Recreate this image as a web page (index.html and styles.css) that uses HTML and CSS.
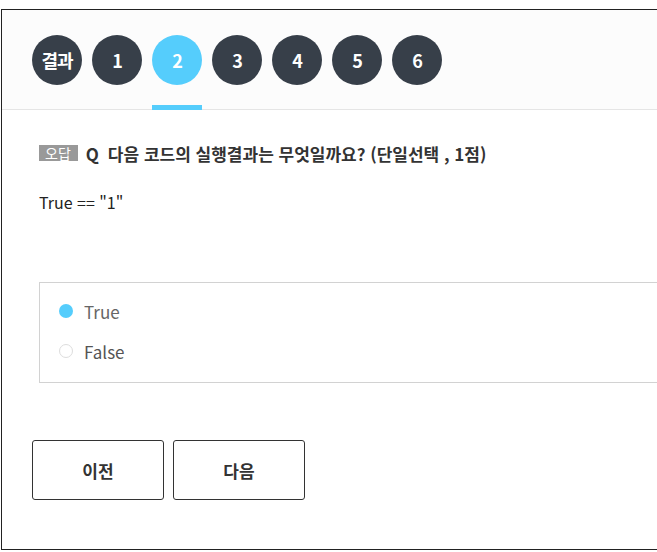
FILE: index.html
```html
<!DOCTYPE html>
<html lang="ko">
<head>
    <meta charset="UTF-8">
    <meta name="viewport" content="width=device-width, initial-scale=1.0">
    <title>퀴즈</title>
    <link rel="stylesheet" href="styles.css">
</head>
<body>
    <div class="quiz">
        <div class="quiz-nav">
            <span class="step">결과</span>
            <span class="step">1</span>
            <span class="step active">2</span>
            <span class="step">3</span>
            <span class="step">4</span>
            <span class="step">5</span>
            <span class="step">6</span>
        </div>

        <div class="question">
            <div class="question-title">
                <span class="badge">오답</span>
                <span class="q-mark">Q</span>
                <span>다음 코드의 실행결과는 무엇일까요? (단일선택 , 1점)</span>
            </div>
            <p class="code">True == "1"</p>

            <div class="options">
                <label class="option checked">
                    <span class="radio"></span>
                    <span class="option-text">True</span>
                </label>
                <label class="option">
                    <span class="radio"></span>
                    <span class="option-text">False</span>
                </label>
            </div>
        </div>

        <div class="buttons">
            <button type="button">이전</button>
            <button type="button">다음</button>
        </div>
    </div>
</body>
</html>
```

FILE: styles.css
```css
html, body {
    overflow: hidden;
}

body {
    margin: 0;
    font-family: "Noto Sans CJK KR", "Noto Sans", sans-serif;
    background: #ffffff;
    color: #333;
}

/* the frame is cut off at the right edge of the window */
.quiz {
    margin: 9px 0 0 1px;
    height: 539px;
    border: 1px solid #222;
    border-right: none;
}

.quiz-nav {
    display: flex;
    gap: 10px;
    padding: 25px 0 24px 30px;
    background-color: #fcfcfc;
    border-bottom: 1px solid #e5e5e5;
}

.step {
    position: relative;
    width: 50px;
    height: 50px;
    border-radius: 50%;
    background-color: #373f49;
    color: #ffffff;
    font-size: 18px;
    font-weight: bold;
    display: flex;
    justify-content: center;
    align-items: center;
    letter-spacing: -1px;
}

.step.active {
    background-color: #55cdfc;
}

.step.active::after {
    content: "";
    position: absolute;
    left: 0;
    top: 70px;
    width: 50px;
    height: 5px;
    background-color: #55cdfc;
}

.question {
    padding: 33px 0 0 37px;
}

.question-title {
    display: flex;
    align-items: center;
    font-size: 17px;
    font-weight: bold;
    color: #333;
    height: 20px;
}

.badge {
    background-color: #999;
    color: #fff;
    font-size: 14px;
    font-weight: normal;
    padding: 0 7px 0 6px;
    height: 16px;
    line-height: 16px;
    margin-right: 8px;
}

.q-mark {
    margin-right: 9px;
}

.code {
    margin: 28px 0 0 0;
    font-size: 16px;
    color: #222;
    line-height: 22px;
}

.options {
    margin-top: 69px;
    border: 1px solid #d2d2d2;
    border-right: none;
    padding: 13px 0 16px 19px;
    display: flex;
    flex-direction: column;
    gap: 10px;
}

.option {
    display: flex;
    align-items: center;
    gap: 11px;
    height: 30px;
    font-size: 17px;
    color: #555;
}

.radio {
    width: 12px;
    height: 12px;
    border: 1px solid #ddd;
    border-radius: 50%;
    background: #fff;
}

.option.checked .radio {
    width: 14px;
    height: 14px;
    border: none;
    background-color: #55cdfc;
}

.option.checked .option-text {
    color: #666;
}

.buttons {
    display: flex;
    gap: 9px;
    padding: 57px 0 0 30px;
}

button {
    width: 132px;
    height: 60px;
    background: #fff;
    border: 1px solid #333;
    border-radius: 3px;
    font-family: inherit;
    font-size: 17px;
    font-weight: bold;
    color: #333;
    cursor: pointer;
}
```
